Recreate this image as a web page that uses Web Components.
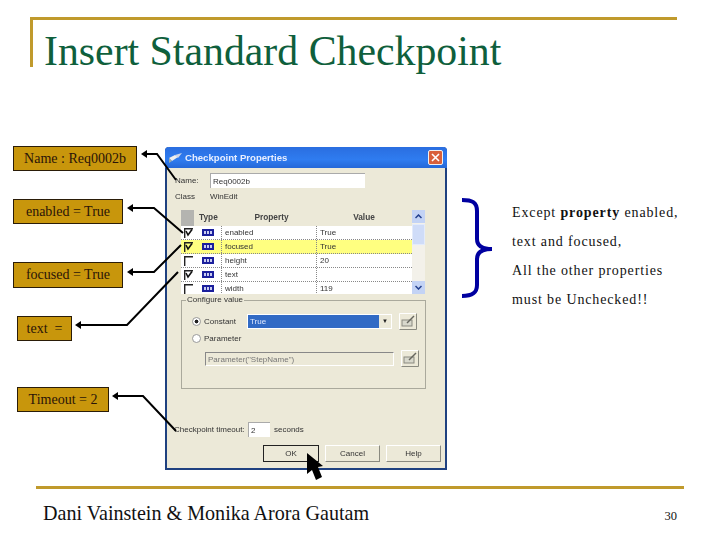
<!DOCTYPE html>
<html>
<head>
<meta charset="utf-8">
<title>Insert Standard Checkpoint</title>
<style>
    html, body { margin: 0; padding: 0; background: #fff; }
    body { font-family: "Liberation Serif", serif; }
</style>
</head>
<body>
<slide-page>
    <slide-title>Insert Standard Checkpoint</slide-title>

    <arrow-lines></arrow-lines>

    <call-out style="left:13px;top:146px;width:124px;height:25px">Name : Req0002b</call-out>
    <call-out style="left:13px;top:199px;width:110px;height:25px">enabled = True</call-out>
    <call-out style="left:13px;top:262px;width:110px;height:26px">focused = True</call-out>
    <call-out style="left:17px;top:316px;width:55px;height:25px">text&nbsp; =</call-out>
    <call-out style="left:17px;top:387px;width:92px;height:25px">Timeout = 2</call-out>

    <checkpoint-dialog></checkpoint-dialog>
    <mouse-cursor></mouse-cursor>
    <side-note></side-note>

    <slide-footer page="30">Dani Vainstein &amp; Monika Arora Gautam</slide-footer>
</slide-page>

<script>
class SlidePage extends HTMLElement {
    connectedCallback() {
        this.attachShadow({ mode: 'open' });
        this.shadowRoot.innerHTML = `
            <style>
                :host {
                    position: relative;
                    display: flex;
                    flex-direction: column;
                    width: 720px;
                    height: 540px;
                    overflow: hidden;
                    background: #fff;
                }
            </style>
            <slot></slot>
        `;
    }
}

class SlideTitle extends HTMLElement {
    connectedCallback() {
        this.attachShadow({ mode: 'open' });
        this.shadowRoot.innerHTML = `
            <style>
                :host {
                    display: block;
                    box-sizing: border-box;
                    width: 647px;
                    height: 50px;
                    margin: 17px 0 0 30px;
                    padding-left: 11px;
                    border-top: 3px solid #c09a2c;
                    border-left: 3px solid #c09a2c;
                    color: #0f5f3c;
                    font: 41.8px/62px "Liberation Serif", serif;
                    white-space: nowrap;
                }
            </style>
            <slot></slot>
        `;
    }
}

class SlideFooter extends HTMLElement {
    connectedCallback() {
        const page = this.getAttribute('page') || '';
        this.attachShadow({ mode: 'open' });
        this.shadowRoot.innerHTML = `
            <style>
                :host {
                    display: flex;
                    justify-content: space-between;
                    align-items: center;
                    box-sizing: border-box;
                    width: 648px;
                    height: 36px;
                    margin: auto 0 18px 36px;
                    padding: 15px 7px 0 7px;
                    border-top: 3px solid #c09a2c;
                    color: #111;
                    font: 20.1px/20px "Liberation Serif", serif;
                }
                .page { font-size: 12.5px; margin-top: 6px; }
            </style>
            <span><slot></slot></span>
            <span class="page">${page}</span>
        `;
    }
}

class CallOut extends HTMLElement {
    connectedCallback() {
        this.attachShadow({ mode: 'open' });
        this.shadowRoot.innerHTML = `
            <style>
                :host {
                    position: absolute;
                    display: flex;
                    align-items: center;
                    justify-content: center;
                    box-sizing: border-box;
                    background: #c8960c;
                    border: 1px solid #2a1c08;
                    color: #2a1408;
                    font: 14px "Liberation Serif", serif;
                    white-space: nowrap;
                }
            </style>
            <slot></slot>
        `;
    }
}

// connector lines between the callouts and the dialog
class ArrowLines extends HTMLElement {
    connectedCallback() {
        const lines = [
            '143,154 157,154 176,180',
            '129,208 154,208 183,233',
            '129,272 154,272 181,245',
            '77,325 127,325 178,272',
            '114,396 143,396 176,431'
        ];
        const heads = [[143, 154], [129, 208], [129, 272], [77, 325], [114, 396]];
        this.attachShadow({ mode: 'open' });
        this.shadowRoot.innerHTML = `
            <style>
                :host { position: absolute; left: 0; top: 0; z-index: 3; }
                svg { display: block; }
            </style>
            <svg width="200" height="450" viewBox="0 0 200 450">
                ${lines.map(p => `<polyline points="${p}" fill="none" stroke="#000" stroke-width="2"/>`).join('')}
                ${heads.map(([x, y]) => `<path d="M${x - 2} ${y}l6 -4v8z" fill="#000"/>`).join('')}
            </svg>
        `;
    }
}

class MouseCursor extends HTMLElement {
    connectedCallback() {
        this.attachShadow({ mode: 'open' });
        this.shadowRoot.innerHTML = `
            <style>
                :host { position: absolute; left: 305px; top: 453px; z-index: 4; }
                svg { display: block; }
            </style>
            <svg width="20" height="28" viewBox="0 0 20 28">
                <path d="M2 0L18 13L13 14L17 24L11 27L7 17L2 21Z" fill="#000"/>
            </svg>
        `;
    }
}

class SideNote extends HTMLElement {
    connectedCallback() {
        this.attachShadow({ mode: 'open' });
        this.shadowRoot.innerHTML = `
            <style>
                :host {
                    position: absolute;
                    left: 462px;
                    top: 197px;
                    display: flex;
                    gap: 19px;
                    color: #111;
                    font: 14px/28.7px "Liberation Serif", serif;
                    letter-spacing: 0.87px;
                    white-space: nowrap;
                }
                svg { display: block; flex: none; }
                .lines { padding-top: 2px; }
                .lines div { height: 29px; }
            </style>
            <svg width="31" height="102" viewBox="0 0 31 102">
                <path d="M0 3C10 3 15 5 15 14V42C15 49 20 52 30 52C20 52 15 55 15 62V88C15 96 10 99 0 99" fill="none" stroke="#0000a0" stroke-width="4"/>
            </svg>
            <div class="lines">
                <div>Except <b>property</b> enabled,</div>
                <div>text and focused,</div>
                <div>All the other properties</div>
                <div>must be Unchecked!!</div>
            </div>
        `;
    }
}

// small flat button with the pencil glyph used next to the value fields
const pickButton = `
    <svg class="pick" width="18" height="17" viewBox="0 0 18 17">
        <path d="M.5 16.5V.5H17.5" fill="none" stroke="#fff"/>
        <path d="M17.5 .5V16.5H.5" fill="none" stroke="#8a8a80"/>
        <rect x="3" y="7" width="10" height="6" fill="#d8d8cc" stroke="#8a8a80"/>
        <path d="M8 10L15 3" stroke="#66665e" stroke-width="1.5"/>
    </svg>`;

class PropertyRow extends HTMLElement {
    connectedCallback() {
        const checked = this.getAttribute('checked') === 'true';
        const selected = this.getAttribute('selected') === 'true';
        const name = this.getAttribute('name') || '';
        const value = this.getAttribute('value') || '';
        this.attachShadow({ mode: 'open' });
        this.shadowRoot.innerHTML = `
            <style>
                :host {
                    display: grid;
                    grid-template-columns: 13px 27px 95px 1fr;
                    height: 14px;
                    box-sizing: border-box;
                    border-bottom: 1px dotted #888;
                    background: ${selected ? '#ffff80' : '#fff'};
                    color: #333;
                    font: 8px/13px "Liberation Sans", sans-serif;
                }
                div { overflow: hidden; display: flex; align-items: center; }
                .text { padding-left: 3px; border-left: 1px dotted #888; }
                svg { display: block; }
                .check { padding-left: 3px; }
                .type { padding-left: 8px; }
            </style>
            <div class="check">
                <svg width="9" height="10" viewBox="0 0 9 10">
                    <path d="M.7 10V.7H9" fill="none" stroke="#222" stroke-width="1.4"/>
                    ${checked ? '<path d="M2 3L4 7L8 1.5" fill="none" stroke="#111" stroke-width="1.6"/>' : ''}
                </svg>
            </div>
            <div class="type">
                <svg width="12" height="7" viewBox="0 0 12 7">
                    <rect width="12" height="7" fill="#1b1f9c"/>
                    <path d="M2 2h2v3h-2zM5 2h2v3h-2zM8 2h2v3h-2z" fill="#c8ccf0"/>
                </svg>
            </div>
            <div class="text">${name}</div>
            <div class="text">${value}</div>
        `;
    }
}

class PropertyList extends HTMLElement {
    connectedCallback() {
        this.attachShadow({ mode: 'open' });
        this.shadowRoot.innerHTML = `
            <style>
                :host {
                    display: flex;
                    width: 244px;
                    height: 84px;
                    margin-left: 14px;
                    overflow: hidden;
                    background: #fff;
                    color: #333;
                    font: 8.3px "Liberation Sans", sans-serif;
                }
                .table { flex: 1; min-width: 0; overflow: hidden; }
                .head {
                    display: grid;
                    grid-template-columns: 13px 27px 95px 1fr;
                    height: 16px;
                    background: #ece9d8;
                    line-height: 15px;
                    font-weight: bold;
                    color: #444;
                }
                .corner { background: #b4b4b0; }
                .head span { text-align: center; }
                .head .type { text-align: left; padding-left: 5px; }
                .head .prop { padding-left: 6px; }
                .bar {
                    flex: none;
                    width: 13px;
                    display: flex;
                    flex-direction: column;
                    background: #f3f1ea;
                }
                .btn {
                    height: 13px;
                    flex: none;
                    background: #c3d3f5;
                }
                .btn svg { display: block; margin: 4px auto 0; }
                .thumb { height: 21px; margin-top: 1px; background: #cfdcf8; border: 1px solid #e3ebfb; box-sizing: border-box; }
                .fill { flex: 1; }
            </style>
            <div class="table">
                <div class="head">
                    <span class="corner"></span>
                    <span class="type">Type</span>
                    <span class="prop">Property</span>
                    <span>Value</span>
                </div>
                <slot></slot>
            </div>
            <div class="bar">
                <div class="btn"><svg width="7" height="5" viewBox="0 0 7 5"><path d="M.5 4L3.5 1L6.500 4" fill="none" stroke="#23408e" stroke-width="1.5"/></svg></div>
                <div class="thumb"></div>
                <div class="fill"></div>
                <div class="btn"><svg width="7" height="5" viewBox="0 0 7 5"><path d="M.5 1L3.5 4L6.500 1" fill="none" stroke="#23408e" stroke-width="1.5"/></svg></div>
            </div>
        `;
    }
}

class CheckpointDialog extends HTMLElement {
    connectedCallback() {
        this.attachShadow({ mode: 'open' });
        this.shadowRoot.innerHTML = `
            <style>
                :host {
                    position: absolute;
                    left: 165px;
                    top: 147px;
                    width: 282px;
                    height: 323px;
                    box-sizing: border-box;
                    display: flex;
                    flex-direction: column;
                    border: solid #1f4180;
                    border-width: 0 2px 2px 2px;
                    border-radius: 4px 4px 0 0;
                    background: #ece9d8;
                    color: #333;
                    font: 8px "Liberation Sans", sans-serif;
                    filter: blur(0.45px);
                }
                .caption {
                    flex: none;
                    display: flex;
                    align-items: center;
                    gap: 2px;
                    height: 21px;
                    margin: 0 -2px;
                    padding: 0 4px 0 3px;
                    background: linear-gradient(#2a6ee0, #2f7cf0 60%, #2568d8);
                    border-radius: 4px 4px 0 0;
                    color: #e8eeff;
                    font-size: 9.6px;
                    font-weight: bold;
                }
                .caption svg { display: block; flex: none; }
                .caption .close {
                    margin-left: auto;
                    width: 15px;
                    height: 15px;
                    background: #d9603a;
                    border: 1px solid #f0f0f0;
                    box-sizing: border-box;
                    border-radius: 2px;
                    position: relative;
                }
                .close svg { position: absolute; left: 2px; top: 2px; }
                .body { flex: 1; position: relative; }
                .line { display: flex; align-items: center; }
                .name { height: 15px; margin: 5px 0 0 8px; }
                .name .lbl, .cls .lbl { width: 35px; }
                .field {
                    height: 15px;
                    line-height: 15px;
                    padding-left: 2px;
                    background: #fff;
                    border-top: 1px solid #aaa;
                    border-left: 1px solid #aaa;
                    box-sizing: border-box;
                }
                .cls { height: 12px; margin: 2px 0 0 8px; }
                property-list { margin-top: 8px; }
                fieldset {
                    box-sizing: border-box;
                    width: 245px;
                    height: 93px;
                    margin: 2px 0 0 14px;
                    padding: 0;
                    border: 1px solid #aaa99c;
                    position: relative;
                }
                legend { margin-left: 4px; padding: 0 1px; line-height: 8px; color: #333; }
                .value { height: 17px; }
                .radio { flex: none; width: 7px; height: 7px; margin-left: 10px; margin-right: 3px; border: 1px solid #999; border-radius: 50%; background: #fff; }
                .radio.on { background: radial-gradient(#222 0 1.7px, #fff 2.2px); }
                .constant { margin-top: 9px; }
                .constant .lbl { width: 43px; }
                .combo {
                    width: 145px;
                    height: 15px;
                    box-sizing: border-box;
                    display: flex;
                    background: #fff;
                    padding: 1px;
                    line-height: 13px;
                }
                .combo span { flex: 1; padding-left: 2px; background: #316ac5; color: #dfe8ff; }
                .combo i {
                    width: 12px;
                    background: #ece9d8;
                    color: #222;
                    font: 6px/13px "Liberation Sans", sans-serif;
                    text-align: center;
                }
                .pick { display: block; flex: none; margin-left: 7px; }
                .param { margin-top: 0; height: 16px; }
                .disabled {
                    margin: 5px 0 0 23px;
                    height: 15px;
                }
                .disabled .box {
                    width: 189px;
                    height: 14px;
                    box-sizing: border-box;
                    padding-left: 2px;
                    line-height: 13px;
                    border-top: 1px solid #888;
                    border-left: 1px solid #888;
                    border-right: 1px solid #fff;
                    border-bottom: 1px solid #fff;
                    color: #777;
                }
                .timeout { height: 15px; margin: 33px 0 0 7px; }
                .timeout .lbl { width: 74px; white-space: nowrap; }
                .timeout .field { width: 22px; margin-right: 4px; }
                .buttons { display: flex; gap: 6px; margin: 8px 0 0 96px; }
                .buttons span {
                    display: block;
                    width: 55px;
                    height: 17px;
                    box-sizing: border-box;
                    line-height: 15px;
                    text-align: center;
                    border: 1px solid #fff;
                    border-right-color: #8a8a80;
                    border-bottom-color: #8a8a80;
                }
                .buttons .def { width: 56px; border: 1px solid #222; }
            </style>
            <div class="caption">
                <svg width="15" height="12" viewBox="0 0 15 12">
                    <path d="M1 6L7 3L10 5L4 9Z" fill="#eee"/>
                    <path d="M7 3L14 1L10 6Z" fill="#cfd6e8"/>
                    <path d="M1 6V11L4 9Z" fill="#9aa"/>
                </svg>
                <span>Checkpoint Properties</span>
                <div class="close">
                    <svg width="9" height="9" viewBox="0 0 9 9"><path d="M1 1L8 8M8 1L1 8" stroke="#fff" stroke-width="1.6"/></svg>
                </div>
            </div>
            <div class="body">
                <div class="line name">
                    <span class="lbl">Name:</span>
                    <span class="field" style="width:155px">Req0002b</span>
                </div>
                <div class="line cls">
                    <span class="lbl">Class</span>
                    <span>WinEdit</span>
                </div>
                <property-list>
                    <property-row checked="true" name="enabled" value="True"></property-row>
                    <property-row checked="true" selected="true" name="focused" value="True"></property-row>
                    <property-row name="height" value="20"></property-row>
                    <property-row checked="true" name="text"></property-row>
                    <property-row name="width" value="119"></property-row>
                </property-list>
                <fieldset>
                    <legend>Configure value</legend>
                    <div class="line value constant">
                        <span class="radio on"></span>
                        <span class="lbl">Constant</span>
                        <div class="combo"><span>True</span><i>&#9660;</i></div>
                        ${pickButton}
                    </div>
                    <div class="line param">
                        <span class="radio"></span>
                        <span>Parameter</span>
                    </div>
                    <div class="line disabled">
                        <div class="box">Parameter("StepName")</div>
                        ${pickButton}
                    </div>
                </fieldset>
                <div class="line timeout">
                    <span class="lbl">Checkpoint timeout:</span>
                    <span class="field">2</span>
                    <span>seconds</span>
                </div>
                <div class="buttons">
                    <span class="def">OK</span>
                    <span>Cancel</span>
                    <span>Help</span>
                </div>
            </div>
        `;
    }
}

customElements.define('slide-page', SlidePage);
customElements.define('slide-title', SlideTitle);
customElements.define('slide-footer', SlideFooter);
customElements.define('call-out', CallOut);
customElements.define('arrow-lines', ArrowLines);
customElements.define('mouse-cursor', MouseCursor);
customElements.define('side-note', SideNote);
customElements.define('property-row', PropertyRow);
customElements.define('property-list', PropertyList);
customElements.define('checkpoint-dialog', CheckpointDialog);
</script>
</body>
</html>
